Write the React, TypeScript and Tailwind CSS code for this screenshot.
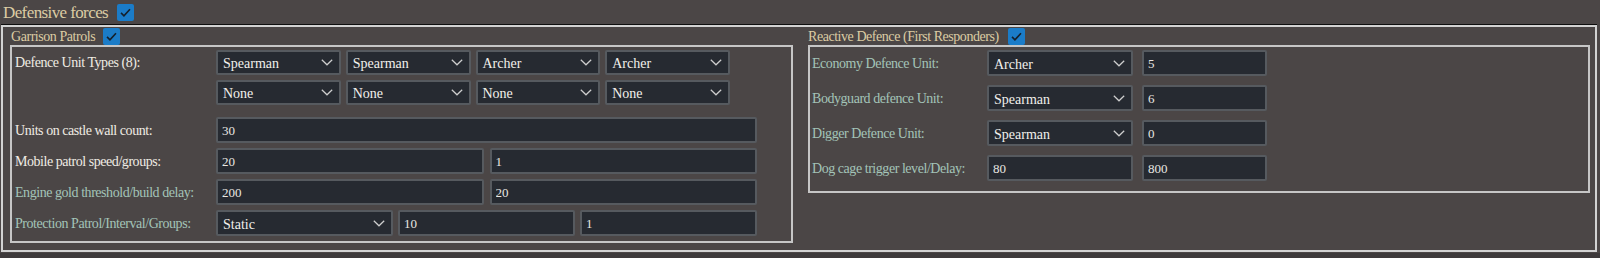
import React from "react";

const serif = "font-['Liberation_Serif','Times_New_Roman',serif]";

const Check = () => (
  <span className="inline-flex h-[17px] w-[17px] items-center justify-center rounded-[2px] bg-[#1b7cc8]">
    <svg width="13" height="13" viewBox="0 0 16 16" fill="none">
      <path d="M2.5 8.5l3.6 3.6L13.5 4" stroke="#15202b" strokeWidth="2" />
    </svg>
  </span>
);

const Chevron = () => (
  <svg width="12" height="7" viewBox="0 0 12 7" fill="none">
    <path d="M0.8 0.8L6 5.8L11.2 0.8" stroke="#cfcfcf" strokeWidth="1.2" />
  </svg>
);

interface SelectProps {
  value: string;
  className?: string;
}

const Select = ({ value, className = "" }: SelectProps) => (
  <div
    className={`flex items-center justify-between rounded-[2px] border-2 border-[#565a5f] bg-[#262a31] pl-[5px] pr-[6px] text-[14px] text-[#f2f0ec] ${serif} ${className}`}
  >
    <span className="pt-[2px]">{value}</span>
    <Chevron />
  </div>
);

const Field = ({ value, className = "" }: SelectProps) => (
  <input
    defaultValue={value}
    className={`h-[26px] w-full rounded-[2px] border-2 border-[#565a5f] bg-[#262a31] px-[4px] pt-[2px] text-[13px] text-[#e9e7e3] outline-none ${serif} ${className}`}
  />
);

const white = "text-[#f0ece4]";
const teal = "text-[#a3c4b8]";

const Label = ({ text, color }: { text: string; color: string }) => (
  <div className={`w-[201px] shrink-0 text-[14px] tracking-[-0.45px] ${color}`}>{text}</div>
);

const RLabel = ({ text }: { text: string }) => (
  <div className={`w-[175px] shrink-0 text-[14px] tracking-[-0.45px] ${teal}`}>{text}</div>
);

export default function App() {
  const unitsRow1 = ["Spearman", "Spearman", "Archer", "Archer"];
  const unitsRow2 = ["None", "None", "None", "None"];

  return (
    <div className={`h-[258px] w-[1600px] bg-[#3d393a] ${serif}`}>
      <div className="h-[253px] bg-[#4b4646]">
        <div className="flex h-[25px] items-center gap-[9px] pl-[3px]">
          <span className="text-[17px] tracking-[-0.6px] text-[#dccca4]">Defensive forces</span>
          <Check />
        </div>

        <div className="ml-[1px] mr-[3px] h-[227px] border-2 border-[#d2d2d2] pl-[7px] pr-[5px] shadow-[0_-1px_0_#0e0e0e]">
          <div className="flex gap-[15px]">
            {/* Garrison */}
            <div className="w-[783px]">
              <div className="flex h-[18px] items-center gap-[8px] pl-[1px]">
                <span className="text-[14px] tracking-[-0.45px] text-[#dccca4]">Garrison Patrols</span>
                <Check />
              </div>
              <div className="h-[198px] border-2 border-[#c6c6c6] pl-[3px] pt-[3px]">
                <div className="flex items-start">
                  <div className="flex h-[25px] items-center">
                    <Label text="Defence Unit Types (8):" color={white} />
                  </div>
                  <div className="grid w-[514px] grid-cols-4 gap-x-[5px] gap-y-[5px]">
                    {unitsRow1.map((u, i) => (
                      <Select key={"a" + i} value={u} className="h-[25px]" />
                    ))}
                    {unitsRow2.map((u, i) => (
                      <Select key={"b" + i} value={u} className="h-[25px]" />
                    ))}
                  </div>
                </div>

                <div className="mt-[12px] flex flex-col gap-[5px]">
                  <div className="flex items-center">
                    <Label text="Units on castle wall count:" color={white} />
                    <div className="w-[541px]">
                      <Field value="30" />
                    </div>
                  </div>
                  <div className="flex items-center">
                    <Label text="Mobile patrol speed/groups:" color={white} />
                    <div className="grid w-[541px] grid-cols-2 gap-[6px]">
                      <Field value="20" />
                      <Field value="1" />
                    </div>
                  </div>
                  <div className="flex items-center">
                    <Label text="Engine gold threshold/build delay:" color={teal} />
                    <div className="grid w-[541px] grid-cols-2 gap-[6px]">
                      <Field value="200" />
                      <Field value="20" />
                    </div>
                  </div>
                  <div className="flex items-center">
                    <Label text="Protection Patrol/Interval/Groups:" color={teal} />
                    <div className="grid w-[541px] grid-cols-3 gap-[5px]">
                      <Select value="Static" className="h-[26px]" />
                      <Field value="10" />
                      <Field value="1" />
                    </div>
                  </div>
                </div>
              </div>
            </div>

            {/* Reactive */}
            <div className="w-[782px]">
              <div className="flex h-[18px] items-center gap-[9px]">
                <span className="text-[14px] tracking-[-0.45px] text-[#dccca4]">Reactive Defence (First Responders)</span>
                <Check />
              </div>
              <div className="flex h-[148px] flex-col gap-[9px] border-2 border-[#c6c6c6] pl-[2px] pt-[3px]">
                <div className="flex items-center">
                  <RLabel text="Economy Defence Unit:" />
                  <Select value="Archer" className="h-[26px] w-[146px]" />
                  <div className="ml-[9px] w-[125px]">
                    <Field value="5" />
                  </div>
                </div>
                <div className="flex items-center">
                  <RLabel text="Bodyguard defence Unit:" />
                  <Select value="Spearman" className="h-[26px] w-[146px]" />
                  <div className="ml-[9px] w-[125px]">
                    <Field value="6" />
                  </div>
                </div>
                <div className="flex items-center">
                  <RLabel text="Digger Defence Unit:" />
                  <Select value="Spearman" className="h-[26px] w-[146px]" />
                  <div className="ml-[9px] w-[125px]">
                    <Field value="0" />
                  </div>
                </div>
                <div className="flex items-center">
                  <RLabel text="Dog cage trigger level/Delay:" />
                  <div className="w-[146px]">
                    <Field value="80" />
                  </div>
                  <div className="ml-[9px] w-[125px]">
                    <Field value="800" />
                  </div>
                </div>
              </div>
            </div>
          </div>
        </div>
      </div>
    </div>
  );
}
